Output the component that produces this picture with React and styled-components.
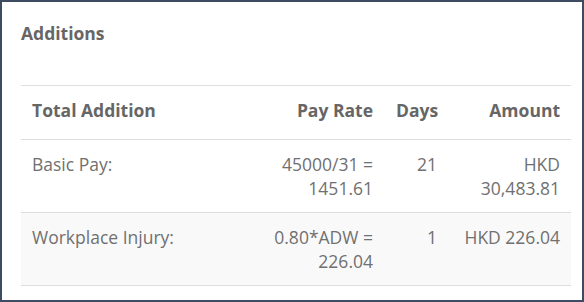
import React from 'react';
import styled, { createGlobalStyle } from 'styled-components';

const C = {
    frame: '#3e4c61',
    line: '#dedede',
    stripe: '#f9f9f9',
    head: '#666666',
    text: '#707070',
};

const Global = createGlobalStyle`
    html, body { margin: 0; padding: 0; background: #fff; }
    body { font-family: 'Open Sans', 'Liberation Sans', sans-serif; }
`;

const Frame = styled.div`
    width: 584px;
    height: 302px;
    box-sizing: border-box;
    border: 2px solid ${C.frame};
    background: #fff;
    padding: 19px 11px 0 19px;
`;

const Title = styled.h5`
    margin: 0 0 40px;
    font-size: 17.5px;
    line-height: 24px;
    font-weight: 700;
    color: ${C.head};
`;

const Table = styled.table`
    width: 550px;
    table-layout: fixed;
    border-collapse: collapse;
    font-size: 17.5px;
    line-height: 24px;
    color: ${C.text};
`;

const Th = styled.th`
    padding: 12px 11px 17px 11px;
    border-top: 1px solid ${C.line};
    border-bottom: 1px solid ${C.line};
    font-weight: 700;
    color: ${C.head};
    text-align: ${({ $right }) => ($right ? 'right' : 'left')};
    vertical-align: top;
    &:nth-child(2), &:nth-child(3) { padding-right: 12px; }
`;

const Row = styled.tr`
    background: ${({ $striped }) => ($striped ? C.stripe : '#fff')};
`;

const Td = styled.td`
    padding: 12px 11px 12px 11px;
    border-bottom: 1px solid ${C.line};
    text-align: ${({ $right }) => ($right ? 'right' : 'left')};
    vertical-align: top;
    &:nth-child(2), &:nth-child(3) { padding-right: 12px; }
`;

const rows = [
    { label: 'Basic Pay:', rate: '45000/31 = 1451.61', days: 21, amount: 'HKD 30,483.81' },
    { label: 'Workplace Injury:', rate: '0.80*ADW = 226.04', days: 1, amount: 'HKD 226.04' },
];

export default function App() {
    return (
        <>
            <Global />
            <Frame>
                <Title>Additions</Title>
                <Table>
                    <colgroup>
                        <col style={{ width: 234 }} />
                        <col style={{ width: 130 }} />
                        <col style={{ width: 64 }} />
                        <col style={{ width: 122 }} />
                    </colgroup>
                    <thead>
                        <tr>
                            <Th>Total Addition</Th>
                            <Th $right>Pay Rate</Th>
                            <Th $right>Days</Th>
                            <Th $right>Amount</Th>
                        </tr>
                    </thead>
                    <tbody>
                        {rows.map((r, i) => (
                            <Row key={r.label} $striped={i % 2 === 1}>
                                <Td>{r.label}</Td>
                                <Td $right>{r.rate}</Td>
                                <Td $right>{r.days}</Td>
                                <Td $right>{r.amount}</Td>
                            </Row>
                        ))}
                    </tbody>
                </Table>
            </Frame>
        </>
    );
}
